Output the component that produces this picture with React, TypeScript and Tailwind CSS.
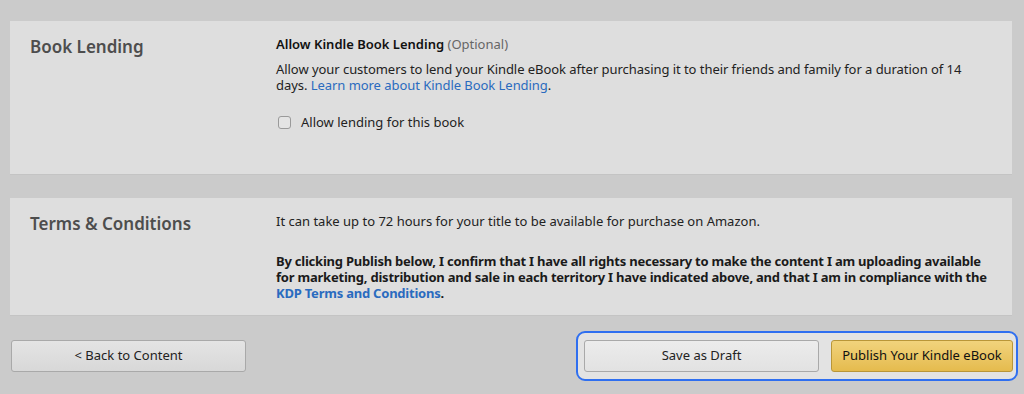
import React, { useState } from 'react';

const FONT = { fontFamily: '"Noto Sans", "Liberation Sans", sans-serif' };

const Section: React.FC<{ title: string; className?: string; children: React.ReactNode }> = ({ title, className, children }) => (
  <div className={`flex bg-[#dedede] border-b border-[#c4c4c4] ${className ?? ''}`}>
    <div className="w-[266px] shrink-0 pl-5 pt-[14px]">
      <h2 className="text-[17px] leading-6 font-semibold text-[#4d4d4d]">{title}</h2>
    </div>
    <div className="flex-1 pr-6 pt-[15px]">{children}</div>
  </div>
);

export default function App() {
  const [lending, setLending] = useState(false);

  return (
    <div className="w-[1024px] h-[394px] bg-[#cbcbcb] pt-[21px] px-[10px] text-[13px] text-[#222]" style={FONT}>
      {/* Book Lending */}
      <Section title="Book Lending" className="h-[154px] mr-[2px]">
        <p className="leading-4">
          <span className="font-semibold text-[#111]">Allow Kindle Book Lending</span>{' '}
          <span className="text-[#666]">(Optional)</span>
        </p>
        <p className="mt-[9px] leading-4 tracking-[-0.05px]">
          Allow your customers to lend your Kindle eBook after purchasing it to their friends and family for a duration of 14
          days. <a className="text-[#2a6bbf]">Learn more about Kindle Book Lending</a>.
        </p>
        <label className="mt-[21px] flex items-center gap-[10px] cursor-pointer select-none">
          <input
            type="checkbox"
            checked={lending}
            onChange={() => setLending(!lending)}
            className="appearance-none w-[13px] h-[13px] ml-[2px] rounded-[3px] border border-[#9a9a9a] bg-[#e4e4e4] checked:bg-[#2a6bbf]"
          />
          <span className="leading-4 text-[#222]">Allow lending for this book</span>
        </label>
      </Section>

      {/* Terms & Conditions */}
      <Section title="Terms &amp; Conditions" className="h-[118px] mt-[23px] mr-[2px]">
        <p className="leading-4">It can take up to 72 hours for your title to be available for purchase on Amazon.</p>
        <p className="mt-6 leading-4 font-bold text-[#1a1a1a] tracking-[-0.22px]">
          By clicking Publish below, I confirm that I have all rights necessary to make the content I am uploading available
          for marketing, distribution and sale in each territory I have indicated above, and that I am in compliance with the{' '}
          <a className="text-[#2a6bbf]">KDP Terms and Conditions</a>.
        </p>
      </Section>

      {/* Action buttons */}
      <div className="flex items-center justify-between mt-[15px]">
        <button className="ml-[1px] w-[235px] h-[32px] rounded-[3px] border border-[#a9a9a9] bg-gradient-to-b from-[#e4e4e4] to-[#d8d8d8] text-[13px] text-[#222]">
          &lt; Back to Content
        </button>
        <div className="-mr-[4px] flex items-center gap-3 rounded-[9px] border-2 border-[#2f6ff0] bg-[#e3e3e3] py-[7px] pl-[6px] pr-[3px]">
          <button className="w-[235px] h-[32px] rounded-[3px] border border-[#a9a9a9] bg-gradient-to-b from-[#ececec] to-[#e2e2e2] text-[13px] text-[#222]">
            Save as Draft
          </button>
          <button className="w-[182px] h-[32px] rounded-[3px] border border-[#b99638] bg-gradient-to-b from-[#f1d37c] to-[#e5bb4d] text-[13px] text-[#111]">
            Publish Your Kindle eBook
          </button>
        </div>
      </div>
    </div>
  );
}
